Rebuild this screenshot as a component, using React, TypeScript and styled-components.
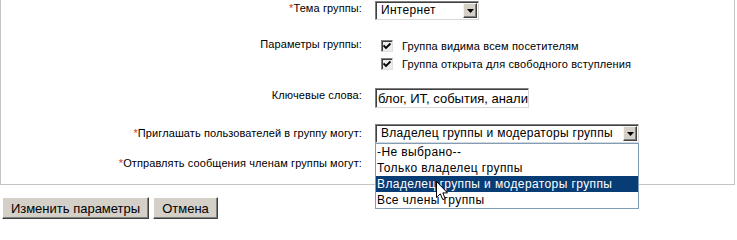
import React from "react";
import styled, { createGlobalStyle } from "styled-components";

const Global = createGlobalStyle`
  html, body { margin: 0; padding: 0; background: #fff; }
  body { font-family: "Liberation Sans", Arial, sans-serif; color: #000; }
`;

const Page = styled.div`
  width: 737px;
  height: 220px;
  overflow: hidden;
  position: relative;
`;

const Panel = styled.div`
  width: 735px;
  border-left: 1px solid #c4c4c4;
  border-right: 1px solid #c4c4c4;
  border-bottom: 1px solid #c4c4c4;
  padding: 1px 0 10px;
  box-sizing: border-box;
  display: flex;
  flex-direction: column;
`;

const Row = styled.div<{ $mt: number; $align?: string }>`
  display: grid;
  grid-template-columns: 361px 1fr;
  column-gap: 13px;
  align-items: ${(p) => p.$align || "center"};
  margin-top: ${(p) => p.$mt}px;
`;

const Label = styled.div<{ $dy?: number }>`
  text-align: right;
  font-size: 11px;
  line-height: 14px;
  letter-spacing: 0.1px;
  position: relative;
  top: ${(p) => p.$dy || 0}px;
`;

const Req = styled.span`
  color: #d23c1e;
`;

const Cell = styled.div`
  position: relative;
  display: flex;
  flex-direction: column;
  align-items: flex-start;
`;

const SelectBox = styled.div<{ $w: number; $hidden?: boolean }>`
  width: ${(p) => p.$w}px;
  height: 19px;
  box-sizing: border-box;
  border-top: 1px solid #808080;
  border-left: 1px solid #808080;
  border-right: 1px solid #d8d8d8;
  border-bottom: 1px solid #d8d8d8;
  box-shadow: inset 1px 1px 0 #404040;
  background: #fff;
  display: flex;
  align-items: stretch;
  font-size: 12px;
  letter-spacing: 0.3px;
  visibility: ${(p) => (p.$hidden ? "hidden" : "visible")};
`;

const SelectText = styled.div`
  flex: 1;
  padding-left: 5px;
  line-height: 17px;
  white-space: nowrap;
  overflow: hidden;
`;

const ArrowBtn = styled.div`
  width: 14px;
  margin: 1px 1px 1px 0;
  box-sizing: border-box;
  background: #d4d0c8;
  border-top: 1px solid #f4f4f4;
  border-left: 1px solid #f4f4f4;
  border-right: 1px solid #404040;
  border-bottom: 1px solid #404040;
  box-shadow: inset -1px -1px 0 #808080;
  display: flex;
  align-items: center;
  justify-content: center;
`;

const CheckList = styled.div`
  display: flex;
  flex-direction: column;
  padding-left: 6px;
`;

const CheckLine = styled.label`
  display: flex;
  align-items: center;
  height: 18px;
  font-size: 11px;
  gap: 9px;
  letter-spacing: 0.15px;
`;

const Box = styled.span`
  width: 12px;
  height: 12px;
  box-sizing: border-box;
  border-top: 1px solid #808080;
  border-left: 1px solid #808080;
  border-right: 1px solid #e0e0e0;
  border-bottom: 1px solid #e0e0e0;
  box-shadow: inset 1px 1px 0 #404040;
  background: #ececec;
  display: flex;
  align-items: center;
  justify-content: center;
`;

const TextInput = styled.input`
  width: 154px;
  height: 20px;
  box-sizing: border-box;
  border-top: 1px solid #808080;
  border-left: 1px solid #808080;
  border-right: 1px solid #d8d8d8;
  border-bottom: 1px solid #d8d8d8;
  box-shadow: inset 1px 1px 0 #404040;
  padding: 0 0 0 2px;
  font-family: "Liberation Sans", Arial, sans-serif;
  font-size: 13px;
  color: #000;
  outline: none;
`;

const DropList = styled.div`
  position: absolute;
  top: 19px;
  left: 0;
  width: 264px;
  box-sizing: border-box;
  border: 1px solid #7f9db9;
  background: #fff;
  z-index: 2;
`;

const Option = styled.div<{ $sel?: boolean }>`
  height: 16px;
  line-height: 16px;
  font-size: 12px;
  letter-spacing: 0.4px;
  padding-left: 1px;
  white-space: nowrap;
  background: ${(p) => (p.$sel ? "#083c74" : "transparent")};
  color: ${(p) => (p.$sel ? "#fff" : "#000")};
`;

const Cursor = styled.svg`
  position: absolute;
  left: 436px;
  top: 181px;
  z-index: 3;
`;

const Buttons = styled.div`
  display: flex;
  gap: 4px;
  margin: 12px 0 0 2px;
`;

const Button = styled.button<{ $w: number }>`
  width: ${(p) => p.$w}px;
  height: 22px;
  box-sizing: border-box;
  background: #d4d0c8;
  border-top: 1px solid #fff;
  border-left: 1px solid #fff;
  border-right: 1px solid #404040;
  border-bottom: 1px solid #404040;
  box-shadow: inset -1px -1px 0 #808080;
  font-family: "Liberation Sans", Arial, sans-serif;
  font-size: 13px;
  color: #000;
  padding: 0;
`;

const Arrow = () => (
  <svg width="7" height="4" viewBox="0 0 7 4">
    <path d="M0 0h7L3.5 4z" fill="#000" />
  </svg>
);

const Check = () => (
  <svg width="8" height="8" viewBox="0 0 8 8">
    <path d="M0.5 3.5L3 6L7.5 1.5" stroke="#000" strokeWidth="1.8" fill="none" />
  </svg>
);

const Select = ({ w, text, hidden }: { w: number; text: string; hidden?: boolean }) => (
  <SelectBox $w={w} $hidden={hidden}>
    <SelectText>{text}</SelectText>
    <ArrowBtn>
      <Arrow />
    </ArrowBtn>
  </SelectBox>
);

export default function App() {
  return (
    <Page>
      <Global />
      <Panel>
        <Row $mt={0}>
          <Label $dy={-3}>
            <Req>*</Req>Тема группы:
          </Label>
          <Cell>
            <Select w={104} text="Интернет" />
          </Cell>
        </Row>
        <Row $mt={17} $align="start">
          <Label $dy={0}>Параметры группы:</Label>
          <CheckList>
            <CheckLine>
              <Box>
                <Check />
              </Box>
              Группа видима всем посетителям
            </CheckLine>
            <CheckLine>
              <Box>
                <Check />
              </Box>
              Группа открыта для свободного вступления
            </CheckLine>
          </CheckList>
        </Row>
        <Row $mt={15}>
          <Label $dy={-3}>Ключевые слова:</Label>
          <Cell>
            <TextInput readOnly defaultValue="блог, ИТ, события, аналитика" />
          </Cell>
        </Row>
        <Row $mt={16}>
          <Label $dy={-1}>
            <Req>*</Req>Приглашать пользователей в группу могут:
          </Label>
          <Cell>
            <Select w={264} text="Владелец группы и модераторы группы" />
            <DropList>
              <Option>-Не выбрано--</Option>
              <Option>Только владелец группы</Option>
              <Option $sel>Владелец группы и модераторы группы</Option>
              <Option>Все члены группы</Option>
            </DropList>
          </Cell>
        </Row>
        <Row $mt={12}>
          <Label $dy={-2}>
            <Req>*</Req>Отправлять сообщения членам группы могут:
          </Label>
          <Cell>
            <Select hidden w={264} text="Владелец группы и модераторы группы" />
          </Cell>
        </Row>
      </Panel>
      <Buttons>
        <Button $w={147}>Изменить параметры</Button>
        <Button $w={65}>Отмена</Button>
      </Buttons>
      <Cursor width="12" height="20" viewBox="0 0 12 20">
        <path
          d="M0.5 0.5V16.5L4.3 12.8L6.8 18.6L9.2 17.6L6.8 11.9H11.5Z"
          fill="#fff"
          stroke="#000"
          strokeWidth="1"
          strokeLinejoin="miter"
        />
      </Cursor>
    </Page>
  );
}
